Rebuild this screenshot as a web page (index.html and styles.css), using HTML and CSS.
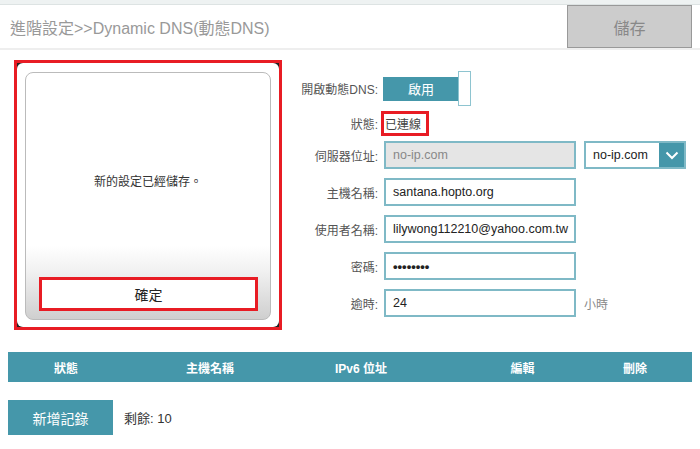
FILE: index.html
```html
<!DOCTYPE html>
<html lang="zh-Hant">
<head>
    <meta charset="UTF-8">
    <title>Dynamic DNS</title>
    <link rel="stylesheet" href="styles.css">
</head>
<body>
    <div class="ddns_topBar"></div>
    <div class="ddns_header">
        <p class="ddns_title">進階設定&gt;&gt;Dynamic DNS(動態DNS)</p>
        <div class="ddns_saveBtn">儲存</div>
    </div>

    <div class="ddns_main">
        <!-- 儲存後的提示框 -->
        <div class="ddns_dialogMark">
            <div class="ddns_dialogBox">
                <div class="ddns_dialogCard">
                    <div class="ddns_dialogMsg">新的設定已經儲存。</div>
                    <div class="ddns_dialogBtn">確定</div>
                </div>
            </div>
        </div>

        <form class="ddns_form">
            <div class="ddns_row ddns_rowToggle">
                <p class="ddns_label">開啟動態DNS:</p>
                <div class="ddns_toggle">
                    <div class="ddns_toggleOn">啟用</div>
                    <div class="ddns_toggleKnob"></div>
                </div>
            </div>
            <div class="ddns_row ddns_rowStatus">
                <p class="ddns_label">狀態:</p>
                <div class="ddns_status">已連線</div>
            </div>
            <div class="ddns_row ddns_rowFirst">
                <p class="ddns_label">伺服器位址:</p>
                <div class="ddns_input ddns_inputOff">no-ip.com</div>
                <div class="ddns_select">
                    <span class="ddns_selectText">no-ip.com</span>
                    <span class="ddns_selectBtn">
                        <svg width="14" height="9" viewBox="0 0 14 9"><path d="M1.5 1.5 L7 7 L12.5 1.5" fill="none" stroke="#fff" stroke-width="2"/></svg>
                    </span>
                </div>
            </div>
            <div class="ddns_row">
                <p class="ddns_label">主機名稱:</p>
                <div class="ddns_input">santana.hopto.org</div>
            </div>
            <div class="ddns_row">
                <p class="ddns_label">使用者名稱:</p>
                <div class="ddns_input">lilywong112210@yahoo.com.tw</div>
            </div>
            <div class="ddns_row">
                <p class="ddns_label">密碼:</p>
                <div class="ddns_input ddns_pwd">••••••••</div>
            </div>
            <div class="ddns_row">
                <p class="ddns_label">逾時:</p>
                <div class="ddns_input">24</div>
                <span class="ddns_unit">小時</span>
            </div>
        </form>
    </div>

    <div class="ddns_tableHead">
        <span>狀態</span>
        <span>主機名稱</span>
        <span>IPv6 位址</span>
        <span>編輯</span>
        <span>刪除</span>
    </div>

    <div class="ddns_bottom">
        <div class="ddns_addBtn">新增記錄</div>
        <span class="ddns_left">剩餘: 10</span>
    </div>
</body>
</html>
```

FILE: styles.css
```css
body{
    margin: 0;
    font-family: "Liberation Sans", "Noto Sans CJK TC", sans-serif;
    color: #333;
}
p{
    margin: 0;
}
.ddns_topBar{
    height: 4px;
    background: #eef2f2;
    border-bottom: 1px solid #dde3e3;
}
.ddns_header{
    display: flex;
    justify-content: space-between;
    align-items: center;
    height: 43px;
    border-bottom: 2px solid #eeeeee;
}
.ddns_title{
    padding-left: 10px;
    font-size: 16px;
    color: #999;
}
.ddns_saveBtn{
    box-sizing: border-box;
    width: 125px;
    height: 43px;
    margin-right: 8px;
    background: #cccccc;
    border: 1px solid #999;
    color: #888;
    font-size: 16px;
    display: flex;
    align-items: center;
    justify-content: center;
}
.ddns_main{
    display: flex;
    align-items: flex-start;
    margin-top: 10px;
}
.ddns_dialogMark{
    box-sizing: border-box;
    width: 268px;
    height: 270px;
    margin-left: 14px;
    border: 3px solid #e81c24;
    background: #222;
}
.ddns_dialogBox{
    box-sizing: border-box;
    height: 100%;
    padding: 9px 8px 7px 8px;
    background: #fff;
    border-radius: 6px;
}
.ddns_dialogCard{
    box-sizing: border-box;
    height: 100%;
    display: flex;
    flex-direction: column;
    border: 1px solid #bbb;
    border-radius: 8px;
    background: linear-gradient(to bottom, #fff 0, #fff 70%, #f2f2f2 80%, #cfcfcf 100%);
}
.ddns_dialogMsg{
    flex: 1;
    display: flex;
    align-items: center;
    justify-content: center;
    padding-top: 11px;
    font-size: 12px;
    color: #333;
}
.ddns_dialogBtn{
    box-sizing: border-box;
    height: 34px;
    margin: 0 12px 8px 13px;
    border: 3px solid #e81c24;
    background: #fff;
    font-size: 14px;
    color: #222;
    display: flex;
    align-items: center;
    justify-content: center;
}
.ddns_form{
    margin: 0 0 0 8px;
    padding-top: 11px;
}
.ddns_row{
    display: flex;
    align-items: center;
    margin-top: 9px;
}
.ddns_rowToggle{
    margin-top: 0;
    height: 35px;
}
.ddns_rowStatus,
.ddns_rowFirst{
    margin-top: 5px;
}
.ddns_label{
    width: 88px;
    margin-right: 6px;
    text-align: right;
    font-size: 12px;
    color: #555;
}
.ddns_toggle{
    display: flex;
    align-items: center;
    margin-left: -1px;
}
.ddns_toggleOn{
    width: 76px;
    height: 24px;
    background: #4597aa;
    color: #fff;
    font-size: 13px;
    display: flex;
    align-items: center;
    justify-content: center;
}
.ddns_toggleKnob{
    box-sizing: border-box;
    width: 13px;
    height: 35px;
    margin-left: -1px;
    background: #fff;
    border: 1px solid #8ec4d0;
}
.ddns_status{
    box-sizing: border-box;
    width: 48px;
    height: 25px;
    margin-left: -3px;
    padding-left: 1px;
    border: 3px solid #e81c24;
    font-size: 12px;
    color: #444;
    display: flex;
    align-items: center;
}
.ddns_input{
    box-sizing: border-box;
    width: 192px;
    height: 28px;
    padding-left: 7px;
    border: 2px solid #7fb9c6;
    background: #fff;
    font-size: 12.5px;
    color: #222;
    display: flex;
    align-items: center;
    white-space: nowrap;
    overflow: hidden;
}
.ddns_inputOff{
    background: #e5e5e5;
    color: #888;
}
.ddns_pwd{
    font-size: 13px;
    font-weight: bold;
}
.ddns_select{
    box-sizing: border-box;
    display: flex;
    width: 102px;
    height: 28px;
    margin-left: 8px;
    border: 2px solid #7fb9c6;
    background: #fff;
}
.ddns_selectText{
    flex: 1;
    padding-left: 7px;
    font-size: 12.5px;
    color: #222;
    display: flex;
    align-items: center;
}
.ddns_selectBtn{
    width: 25px;
    background: #4597aa;
    display: flex;
    align-items: center;
    justify-content: center;
}
.ddns_unit{
    margin-left: 8px;
    font-size: 12px;
    color: #888;
}
.ddns_tableHead{
    display: grid;
    grid-template-columns: 116px 172px 130px 193px 32px;
    height: 30px;
    margin: 22px 8px 0 8px;
    background: #4597aa;
    color: #fff;
    font-size: 12px;
    font-weight: bold;
    align-items: center;
}
.ddns_tableHead span{
    text-align: center;
    white-space: nowrap;
}
.ddns_bottom{
    display: flex;
    align-items: center;
    margin: 18px 0 0 8px;
}
.ddns_addBtn{
    width: 105px;
    height: 35px;
    background: #4597aa;
    color: #fff;
    font-size: 14px;
    display: flex;
    align-items: center;
    justify-content: center;
}
.ddns_left{
    margin-left: 11px;
    font-size: 13px;
    color: #333;
}
```
